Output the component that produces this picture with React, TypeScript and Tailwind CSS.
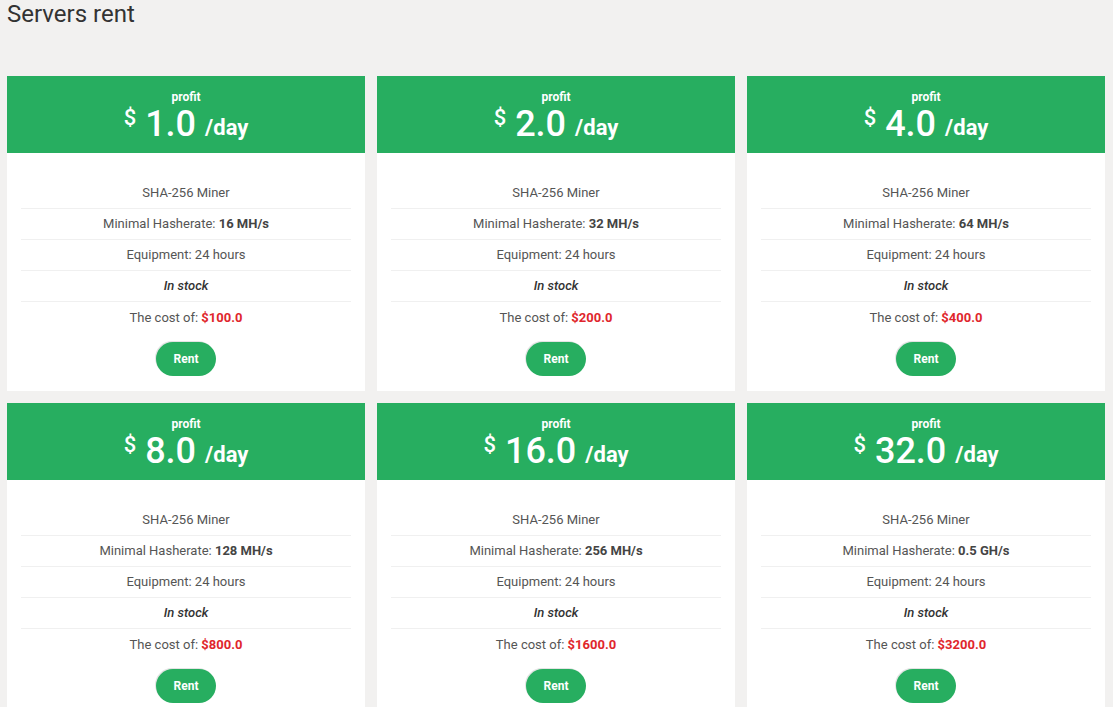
import React from "react";

interface Plan {
  profit: string;
  hashrate: string;
  cost: string;
}

const plans: Plan[] = [
  { profit: "1.0", hashrate: "16 MH/s", cost: "$100.0" },
  { profit: "2.0", hashrate: "32 MH/s", cost: "$200.0" },
  { profit: "4.0", hashrate: "64 MH/s", cost: "$400.0" },
  { profit: "8.0", hashrate: "128 MH/s", cost: "$800.0" },
  { profit: "16.0", hashrate: "256 MH/s", cost: "$1600.0" },
  { profit: "32.0", hashrate: "0.5 GH/s", cost: "$3200.0" },
];

const Row = ({ children, last }: { children: React.ReactNode; last?: boolean }) => (
  <li
    className={`h-[31px] flex items-center justify-center ${
      last ? "" : "border-b border-[#f0f0f0]"
    }`}
  >
    {children}
  </li>
);

const PlanCard = ({ plan }: { plan: Plan }) => (
  <div className="bg-white">
    <div className="bg-[#27ae60] h-[77px] flex flex-col items-center pt-[14px] text-white">
      <span className="text-[12px] font-bold leading-[14px]">profit</span>
      <div className="flex items-start leading-none mt-[1px]">
        <span className="text-[22px] font-medium mt-[2px] mr-[9px]">$</span>
        <span className="text-[36px] font-medium leading-[38px]">{plan.profit}</span>
        <span className="text-[22px] font-bold ml-[9px] mt-[12px]">/day</span>
      </div>
    </div>
    <div className="px-[14px] pt-[25px] pb-[15px]">
      <ul className="text-[13px] text-[#555]">
        <Row>SHA-256 Miner</Row>
        <Row>
          Minimal Hasherate:&nbsp;<b className="font-bold text-[#444]">{plan.hashrate}</b>
        </Row>
        <Row>Equipment: 24 hours</Row>
        <Row>
          <i className="font-medium text-[#333]">In stock</i>
        </Row>
        <Row last>
          The cost of:&nbsp;<b className="font-bold text-[#e0262c]">{plan.cost}</b>
        </Row>
      </ul>
      <div className="flex justify-center mt-[9px]">
        <button className="w-[60px] h-[34px] rounded-full bg-[#27ae60] text-white text-[12px] font-bold shadow-[-1px_-1px_0_#e4e4e4]">
          Rent
        </button>
      </div>
    </div>
  </div>
);

export default function App() {
  return (
    <div
      className="min-h-screen bg-[#f2f1f0] pl-[7px] pr-[8px]"
      style={{ fontFamily: "Roboto, 'Liberation Sans', sans-serif" }}
    >
      <h1 className="text-[24px] text-[#333] leading-[28px]">Servers rent</h1>
      <div className="grid grid-cols-3 gap-[12px] mt-[48px]">
        {plans.map((plan, i) => (
          <PlanCard key={i} plan={plan} />
        ))}
      </div>
    </div>
  );
}
